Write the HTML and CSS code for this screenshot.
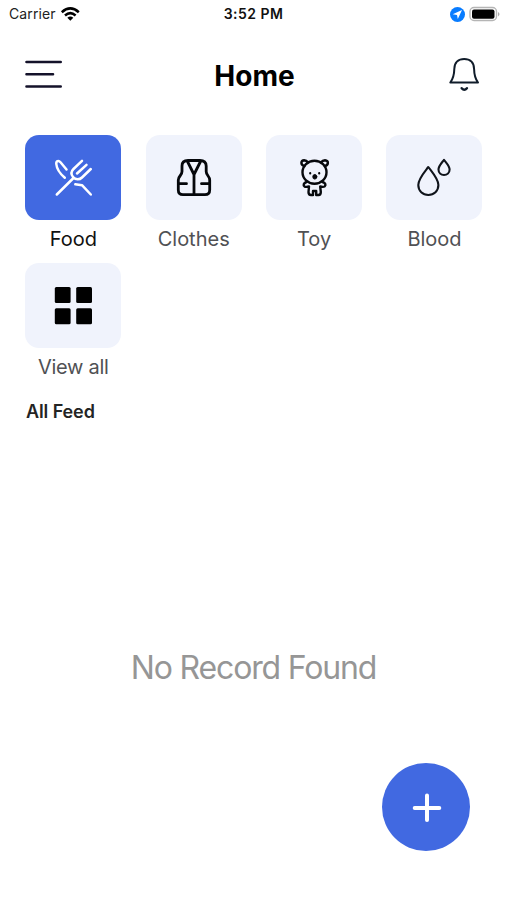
FILE: index.html
```html
<!DOCTYPE html>
<html lang="en">
<head>
<meta charset="utf-8">
<title>Home</title>
<link rel="stylesheet" href="styles.css">
</head>
<body>
<div class="screen">
  <div class="status">
    <div class="carrier"><span>Carrier</span>
      <svg width="20" height="16" viewBox="61 5 20 16" fill="none" stroke="#000" stroke-width="2.5"><path d="M62.8 11.2Q71.3 3.6 79.8 11.2M66 14.5Q71.3 9.8 76.600 14.5"/><path d="M68.300 16.800Q71.3 14.200 74.300 16.800L71.3 19.700Z" fill="#000" stroke="none"/></svg>
    </div>
    <div class="time">3:52 PM</div>
    <svg class="power" width="52" height="18" viewBox="450 4 52 18"><circle cx="458.500" cy="13.500" r="7.500" fill="#087cff"/><path d="M463 9L453.700 13.300L458 14L458.800 18Z" fill="#fff"/><rect x="471" y="6.500" width="26.500" height="13" rx="4" fill="#fff" stroke="#b5b5b5" stroke-width="1.400"/><rect x="473" y="8.500" width="22.500" height="9.200" rx="2" fill="#000"/><path d="M499 11Q502 13.200 499 15.500Z" fill="#aaa"/></svg>
  </div>
  <header class="header">
    <svg width="40" height="36" viewBox="24 57 40 36" fill="none" stroke="#14122a" stroke-width="2.600" stroke-linecap="round"><path d="M26.500 62H60.700M26.500 74.300H53M26.500 86.500H60.700"/></svg>
    <h1>Home</h1>
    <svg width="34" height="38" viewBox="447 56 34 38" fill="none" stroke="#101c2a" stroke-width="2" stroke-linejoin="round" stroke-linecap="round"><path d="M450.300 82.500C453.300 78.500 454.200 75.500 454.300 69C454.400 62.500 458.500 59 464.200 59C470 59 474 62.500 474.100 69C474.200 75.500 475 78.500 478 82.500Z"/><path d="M461.700 88.200Q464.300 91.200 466.900 88.200" stroke-width="2.500"/></svg>
  </header>
  <main>
    <div class="categories">
      <div class="category active"><div class="tile">
        <svg width="96" height="85" viewBox="25 135 96 85" fill="none" stroke="#fff" stroke-width="2.500" stroke-linecap="round" stroke-linejoin="round"><path d="M56.800 194.500L73 178.500M82 160.800L73.500 169C70.500 172 71 174.500 73 177C75.500 180 79.500 180 82 177.500L90.800 169M86.500 164.800L77 173.500M66.500 169.500L60.500 162.300C58.500 160 56 161 56.300 164C56.800 169.500 59.800 173.500 64.800 177.800M75.300 184.300L82 185.200L90.800 194.500"/></svg>
      </div><span>Food</span></div>
      <div class="category"><div class="tile">
        <svg width="96" height="85" viewBox="146 135 96 85" fill="none" stroke="#05070b" stroke-width="2.800" stroke-linecap="round" stroke-linejoin="round"><path d="M188 160.500H200Q206 160.500 206.200 166V171.500C206.200 175.500 209.700 176 209.700 180V190Q209.700 194.700 205 194.700H183Q178.300 194.700 178.300 190V180C178.300 176 182 175.500 182 171.500V166Q182 160.500 188 160.500ZM187.500 161.500L194 174.500L200.500 161.500M194 174.500V194M179 183.700H186.500M201.500 183.700H209"/></svg>
      </div><span>Clothes</span></div>
      <div class="category"><div class="tile">
        <svg width="96" height="85" viewBox="266 135 96 85" fill="none" stroke="#07090d" stroke-width="2.400" stroke-linecap="round" stroke-linejoin="round"><path d="M304.500 166.200C300 164.800 300.800 160.500 304.200 160.300Q306.500 160.400 307.800 162.300M321.200 162.300Q322.500 160.400 325 160.300C328.800 160.700 329 164.800 324.700 166.200"/><ellipse cx="314.500" cy="172.300" rx="12" ry="11.500"/><path d="M306.500 182C303.500 183 302.800 185.500 304.700 186.600Q306 187.300 309 186.500L308.500 192Q308.500 195 311 195H313V191H316.200V195H318.500Q320.800 195 320.800 192L320.200 186.500Q323.500 187.300 324.700 186.300C326.300 184.700 325.200 182.800 322.500 182"/><ellipse cx="314.800" cy="176.800" rx="2" ry="2.300" fill="#07090d" stroke-width="1"/><path d="M310.200 173.200V173.400M319.200 173.200V173.400" stroke-width="2.200"/></svg>
      </div><span>Toy</span></div>
      <div class="category"><div class="tile">
        <svg width="96" height="85" viewBox="387 135 96 85" fill="none" stroke="#10141b" stroke-width="2.100" stroke-linejoin="round"><path d="M429.300 167C425.500 172 419.300 179 419.300 185C419.300 191 423.800 195 429.300 195C435 195 439.400 191 439.400 185C439.400 179 433 172 429.300 167ZM445 159.800C443 162.500 439.500 166 439.500 169.500C439.500 173 442 175 445 175C448 175 450.600 173 450.600 169.500C450.600 166 447 162.500 445 159.800Z"/></svg>
      </div><span>Blood</span></div>
      <div class="category"><div class="tile">
        <svg width="96" height="85" viewBox="25 263 96 85" fill="#000"><rect x="54.800" y="287" width="15.800" height="16" rx="1.500"/><rect x="76.200" y="287" width="15.800" height="16" rx="1.500"/><rect x="54.800" y="308.300" width="15.800" height="16" rx="1.500"/><rect x="76.200" y="308.300" width="15.800" height="16" rx="1.500"/></svg>
      </div><span class="tight">View all</span></div>
    </div>
    <h2>All Feed</h2>
    <p class="empty">No Record Found</p>
  </main>
  <button class="add" aria-label="Add"><svg width="88" height="88" viewBox="382 763 88 88" stroke="#fff" stroke-width="4" stroke-linecap="round"><path d="M427 795.500V820M414.700 808H439.300"/></svg></button>
</div>
</body>
</html>
```
FILE: styles.css
```css
* { box-sizing: border-box; }
body { margin: 0; background: #fff; font-family: Inter, sans-serif; }
svg { display: block; }
.screen { position: relative; width: 507px; height: 900px; overflow: hidden; }
.status { display: grid; grid-template-columns: 1fr auto 1fr; align-items: center; height: 27px; padding: 0 6px 0 9px; font-size: 14px; color: #222; }
.carrier { display: flex; align-items: center; gap: 4px; letter-spacing: 0.1px; }
.time { color: #111; font-weight: 600; letter-spacing: 0.45px; padding-right: 3px; }
.power { justify-self: end; }
.header { display: flex; align-items: center; justify-content: space-between; height: 94px; margin-top: 1px; padding: 0 26px 0 24px; }
.header h1 { margin: 1px 2px 0 0; font-size: 28px; line-height: 34px; font-weight: 700; }
.categories { display: grid; grid-template-columns: repeat(4, 96px); column-gap: 24.4px; padding: 13px 0 0 25.3px; }
.category { height: 128px; display: flex; flex-direction: column; align-items: center; color: #505154; font-size: 20px; line-height: 26px; }
.tile { width: 96px; height: 85px; margin-bottom: 6px; border-radius: 14px; background: #f0f3fc; }
.tight { letter-spacing: -0.3px; }
.active { color: #111; }
.active .tile { background: #4169e1; }
h2 { margin: 9px 0 0 26px; font-size: 18px; line-height: 24px; font-weight: 600; letter-spacing: -0.1px; color: #242424; }
.empty { margin: 224px 0 0; text-align: center; color: #969696; font-size: 32px; line-height: 40px; letter-spacing: -1.15px; }
.add { position: absolute; left: 382px; top: 763px; width: 88px; height: 88px; padding: 0; border: 0; border-radius: 50%; background: #4169e1; }
```
